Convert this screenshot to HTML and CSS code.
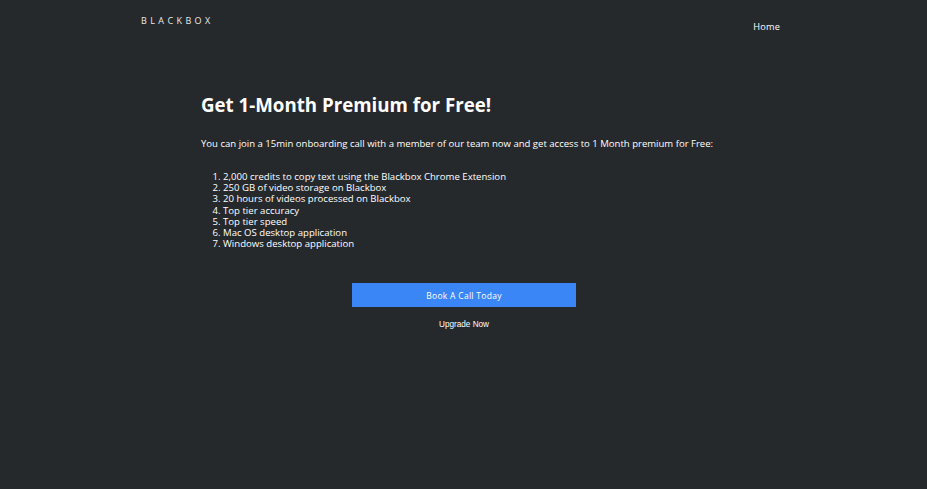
FILE: index.html
```html
<!DOCTYPE html>
<html>
<head>
<meta charset="utf-8">
<link rel="stylesheet" href="styles.css">
</head>
<body>
<header class="header">
  <div class="logo">BLACKBOX</div>
  <nav class="nav"><a class="nav-link" href="#">Home</a></nav>
</header>
<main class="main">
  <h1 class="title">Get 1-Month Premium for Free!</h1>
  <p class="intro">You can join a 15min onboarding call with a member of our team now and get access to 1 Month premium for Free:</p>
  <ol class="perks">
    <li>2,000 credits to copy text using the Blackbox Chrome Extension</li>
    <li>250 GB of video storage on Blackbox</li>
    <li>20 hours of videos processed on Blackbox</li>
    <li>Top tier accuracy</li>
    <li>Top tier speed</li>
    <li>Mac OS desktop application</li>
    <li>Windows desktop application</li>
  </ol>
  <div class="actions">
    <a class="btn-primary" href="#">Book A Call Today</a>
    <a class="btn-link" href="#">Upgrade Now</a>
  </div>
</main>
</body>
</html>
```
FILE: styles.css
```css
html, body {
  margin: 0;
  padding: 0;
  background: #26292c;
  color: #ffffff;
  font-family: "Open Sans", "DejaVu Sans", sans-serif;
  height: 100%;
}
.header {
  display: flex;
  justify-content: space-between;
  align-items: flex-start;
  padding: 15px 147px 0 141px;
}
.logo {
  font-size: 9px;
  letter-spacing: 3.4px;
  color: #e8e8e8;
  line-height: 12px;
}
.nav {
  padding-top: 6px;
  font-size: 9.5px;
  line-height: 12px;
}
.nav-link {
  display: block;
  color: #ffffff;
  text-decoration: none;
  font-size: 9.2px;
  font-weight: 500;
  letter-spacing: 0.2px;
  line-height: 12px;
}
.main {
  padding: 59px 0 0 201px;
}
.title {
  margin: 0;
  font-size: 18.7px;
  font-weight: 700;
  line-height: 26px;
}
.intro {
  margin: 20px 0 0;
  font-size: 9.55px;
  line-height: 12px;
}
.perks {
  margin: 21px 0 0;
  padding-left: 22px;
  font-size: 9.6px;
  line-height: 11.2px;
}
.actions {
  display: flex;
  flex-direction: column;
  align-items: center;
  width: 526px;
  margin-top: 34px;
}
.btn-primary {
  display: flex;
  align-items: center;
  justify-content: center;
  width: 224px;
  height: 24px;
  background: #3b86f7;
  color: #ffffff;
  text-decoration: none;
  font-size: 8.5px;
  letter-spacing: 0.3px;
}
.btn-link {
  margin-top: 12px;
  color: #ffffff;
  text-decoration: none;
  font-family: "Liberation Sans", Arial, sans-serif;
  font-size: 8.2px;
  line-height: 12px;
}
```
